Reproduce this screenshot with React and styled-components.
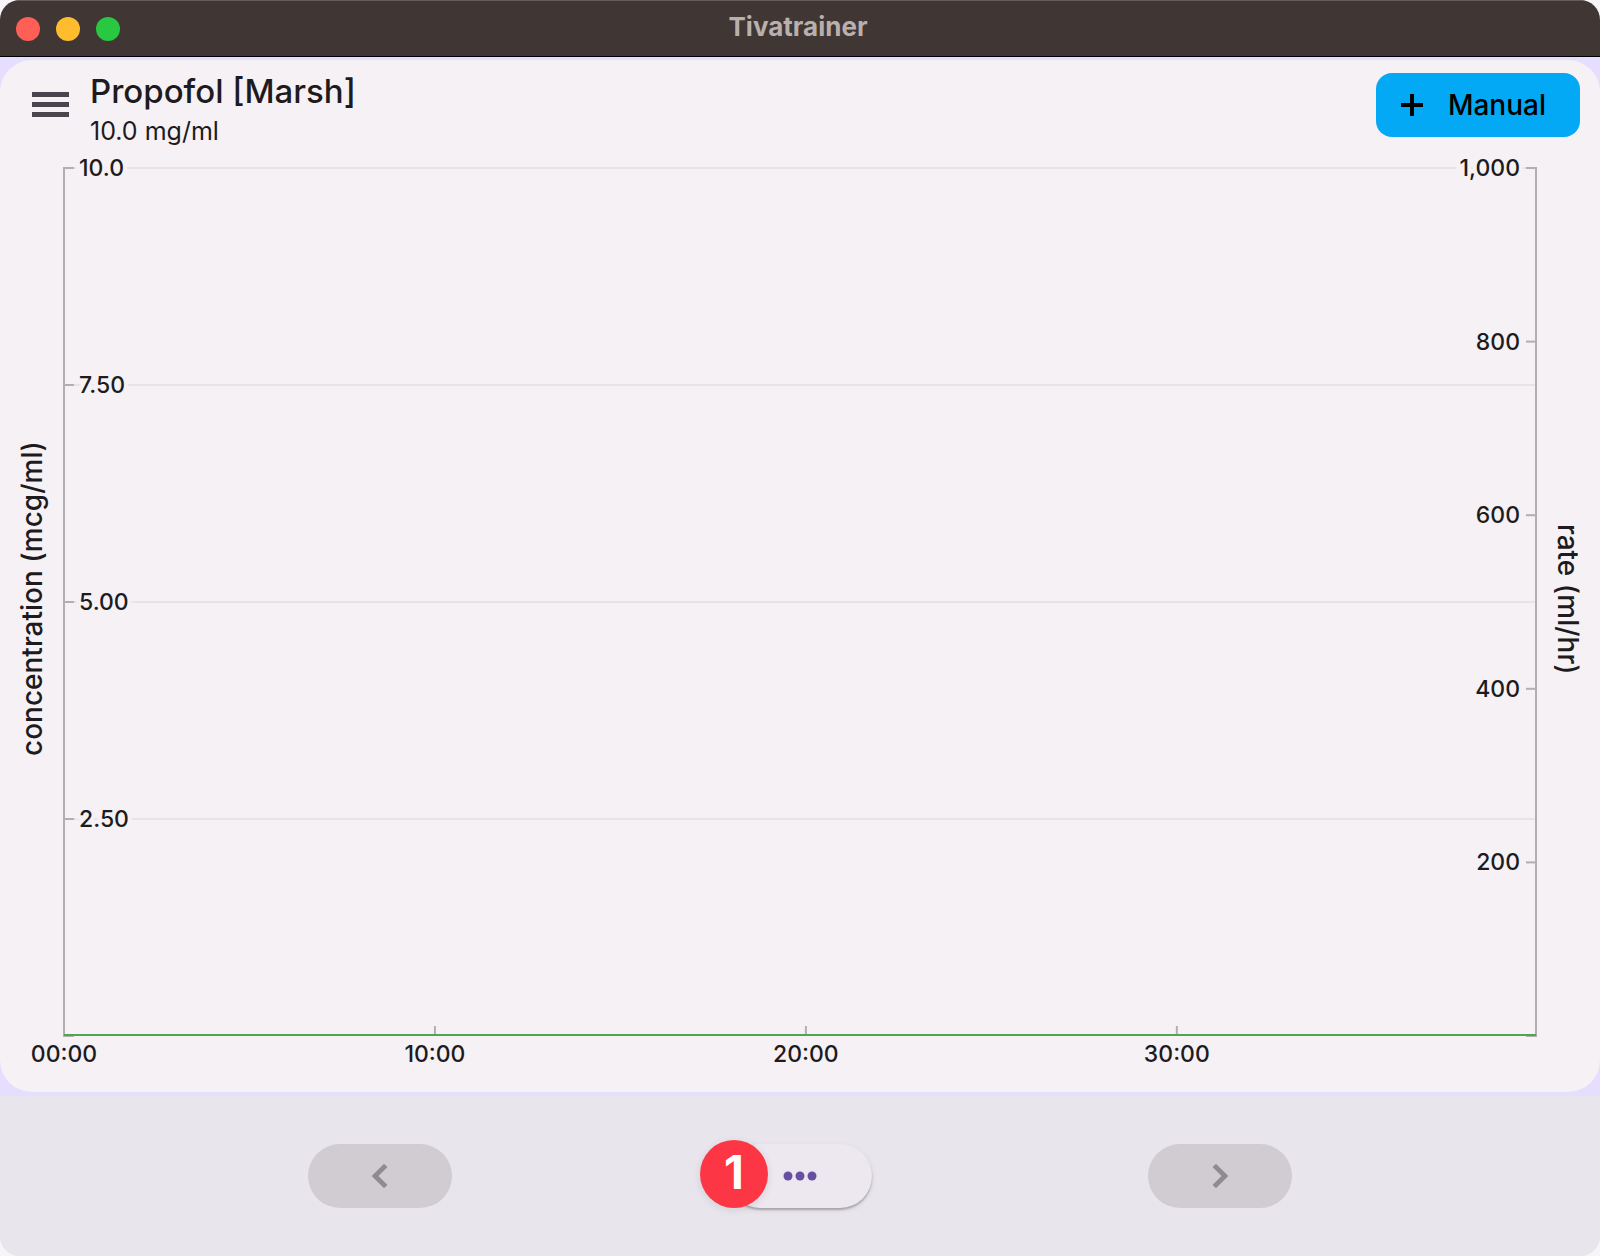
import React from "react";
import styled, { createGlobalStyle } from "styled-components";

const Global = createGlobalStyle`
  * { box-sizing: border-box; }
  body {
    margin: 0;
    background: #f7f5f8;
    font-family: Inter, "Liberation Sans", sans-serif;
    color: #1d1b20;
  }
  button { font: inherit; border: 0; padding: 0; margin: 0; cursor: pointer; }
  h1, p { margin: 0; }
`;

const Window = styled.div`
  min-height: 100vh;
  display: flex;
  flex-direction: column;
  overflow: hidden;
  border-radius: 20px;
  background: #e6deff;
`;

const TitleBar = styled.header`
  display: grid;
  grid-template-columns: 1fr auto 1fr;
  align-items: center;
  height: 57px;
  padding: 0 20px 0 16px;
  background: #403633;
  border-top: 1px solid #665d5a;
  border-bottom: 1px solid #000;
`;

const Lights = styled.div`
  display: flex;
  gap: 16px;
`;

const Light = styled.button`
  width: 24px;
  height: 24px;
  border-radius: 50%;
  background: ${(p) => p.$color};
`;

const WindowTitle = styled.div`
  padding-bottom: 4px;
  font-size: 26px;
  line-height: 32px;
  font-weight: 700;
  color: #b9afad;
`;

const Card = styled.main`
  flex: 1;
  display: flex;
  flex-direction: column;
  margin: 3px 0 4px;
  padding-bottom: 56px;
  border-radius: 32px;
  background: #f6f1f5;
`;

const Header = styled.div`
  display: flex;
  align-items: flex-start;
  padding: 13px 20px 15px 32px;
`;

const MenuButton = styled.button`
  display: flex;
  align-items: center;
  height: 64px;
  margin-right: 21px;
  background: none;
`;

const Heading = styled.div`
  flex: 1;
`;

const Drug = styled.h1`
  font-size: 33px;
  line-height: 36px;
  font-weight: 500;
`;

const Strength = styled.p`
  font-size: 25px;
  line-height: 44px;
`;

const ManualButton = styled.button`
  display: flex;
  align-items: center;
  gap: 24px;
  height: 64px;
  padding: 0 34px 0 24px;
  border-radius: 16px;
  background: #03a9f4;
  color: #000;
  font-size: 28px;
  font-weight: 500;
`;

const ChartRow = styled.section`
  flex: 1;
  display: grid;
  grid-template-columns: 64px 1fr 64px;
`;

const AxisTitle = styled.div`
  display: flex;
  align-items: center;
  justify-content: center;
  writing-mode: vertical-rl;
  font-size: 28px;
  line-height: 64px;
  font-weight: 500;
  padding-${(p) => (p.$upward ? "top" : "bottom")}: 6px;
  transform: ${(p) => (p.$upward ? "rotate(180deg)" : "none")};
`;

const PlotArea = styled.div`
  display: flex;
  min-height: 400px;
`;

const Plot = styled.svg`
  flex: 1;
  width: 100%;
  height: auto;
  overflow: visible;
`;

const Grid = styled.line`
  stroke: #e8e3e8;
  stroke-width: 2;
`;

const Axis = styled.line`
  stroke: #b3aeb3;
  stroke-width: 2;
`;

const Infusion = styled.line`
  stroke: #4ca750;
  stroke-width: 2;
`;

const TickLabel = styled.text`
  font-size: 23px;
  font-weight: 500;
  fill: #1d1b20;
  stroke: #f6f1f5;
  stroke-width: 8;
  paint-order: stroke;
  text-anchor: ${(p) => p.$anchor};
`;

const Footer = styled.footer`
  display: flex;
  justify-content: space-evenly;
  padding: 48px 32px;
  background: #e8e5ec;
`;

const Pill = styled.button`
  display: flex;
  align-items: center;
  justify-content: center;
  width: 144px;
  height: 64px;
  border-radius: 32px;
  color: #6750a4;
  background: #ede8ef;
  box-shadow: 0 2px 2px rgba(0, 0, 0, 0.24), 0 2px 6px rgba(0, 0, 0, 0.08);

  &:disabled {
    color: #8f8b91;
    background: #d0ccd2;
    box-shadow: none;
    cursor: default;
  }
`;

const MoreSlot = styled.div`
  position: relative;
`;

const Badge = styled.span`
  position: absolute;
  left: -28px;
  top: -4px;
  width: 68px;
  height: 68px;
  border-radius: 50%;
  background: #fc3644;
  color: #fff;
  font-size: 46px;
  line-height: 64px;
  font-weight: 700;
  text-align: center;
  box-shadow: 0 2px 8px rgba(0, 0, 0, 0.1);
`;

const lights = [
  ["Close", "#ff5f57"],
  ["Minimize", "#febc2e"],
  ["Zoom", "#28c840"],
];

const concentrations = [
  { label: "10.0", at: 0 },
  { label: "7.50", at: 25 },
  { label: "5.00", at: 50 },
  { label: "2.50", at: 75 },
];

const rates = [
  { label: "1,000", at: 0 },
  { label: "800", at: 20 },
  { label: "600", at: 40 },
  { label: "400", at: 60 },
  { label: "200", at: 80 },
];

const times = [
  { label: "00:00", at: 0 },
  { label: "10:00", at: 25.2 },
  { label: "20:00", at: 50.4 },
  { label: "30:00", at: 75.6 },
];

function Chart() {
  return (
    <Plot role="img" aria-label="Concentration and rate over time">
      {concentrations.map(({ at }) => (
        <Grid key={at} x1="0" x2="100%" y1={`${at}%`} y2={`${at}%`} />
      ))}
      {concentrations.map(({ label, at }) => (
        <TickLabel key={label} $anchor="start" x="15" y={`${at}%`} dy="8">
          {label}
        </TickLabel>
      ))}
      {rates.map(({ label, at }) => (
        <TickLabel key={label} $anchor="end" x="100%" y={`${at}%`} dx="-16" dy="8">
          {label}
        </TickLabel>
      ))}
      {times.map(({ label, at }) => (
        <TickLabel key={label} $anchor="middle" x={`${at}%`} y="100%" dy="26">
          {label}
        </TickLabel>
      ))}

      <Axis x1="0" x2="0" y1="0" y2="100%" />
      <Axis x1="100%" x2="100%" y1="0" y2="100%" />
      {[...concentrations, { at: 100 }].map(({ at }) => (
        <Axis key={at} x1="-1" x2="10" y1={`${at}%`} y2={`${at}%`} />
      ))}
      <svg x="100%" overflow="visible">
        {[...rates, { at: 100 }].map(({ at }) => (
          <Axis key={at} x1="-10" x2="1" y1={`${at}%`} y2={`${at}%`} />
        ))}
      </svg>
      <svg y="100%" overflow="visible">
        {times.map(({ at }) => (
          <Axis key={at} x1={`${at}%`} x2={`${at}%`} y1="-10" y2="0" />
        ))}
        <Infusion x1="0" x2="100%" y1="-1" y2="-1" />
      </svg>
    </Plot>
  );
}

function Chevron({ right }) {
  return (
    <svg width="48" height="48" viewBox="0 0 24 24" aria-hidden="true">
      <path
        fill="currentColor"
        stroke="currentColor"
        strokeWidth="0.6"
        strokeLinejoin="round"
        d={
          right
            ? "M8.7 7.5 10 6.3l5.7 5.7-5.7 5.7-1.3-1.2 4.5-4.5z"
            : "M15.3 7.5 14 6.3 8.3 12l5.7 5.7 1.3-1.2-4.5-4.5z"
        }
      />
    </svg>
  );
}

export default function App() {
  return (
    <Window>
      <Global />
      <TitleBar>
        <Lights>
          {lights.map(([name, color]) => (
            <Light key={name} type="button" aria-label={name} $color={color} />
          ))}
        </Lights>
        <WindowTitle>Tivatrainer</WindowTitle>
      </TitleBar>

      <Card>
        <Header>
          <MenuButton type="button" aria-label="Menu">
            <svg width="37" height="26" viewBox="0 0 37 26" aria-hidden="true">
              <path fill="#49454f" d="M0 0h37v5H0zM0 10h37v5H0zM0 20h37v5H0z" />
            </svg>
          </MenuButton>
          <Heading>
            <Drug>Propofol [Marsh]</Drug>
            <Strength>10.0 mg/ml</Strength>
          </Heading>
          <ManualButton type="button">
            <svg width="24" height="24" viewBox="0 0 24 24" aria-hidden="true">
              <path fill="currentColor" d="M10 1h4v9h9v4h-9v9h-4v-9H1v-4h9z" />
            </svg>
            Manual
          </ManualButton>
        </Header>

        <ChartRow>
          <AxisTitle $upward>concentration (mcg/ml)</AxisTitle>
          <PlotArea>
            <Chart />
          </PlotArea>
          <AxisTitle>rate (ml/hr)</AxisTitle>
        </ChartRow>
      </Card>

      <Footer>
        <Pill type="button" aria-label="Previous" disabled>
          <Chevron />
        </Pill>
        <MoreSlot>
          <Pill type="button" aria-label="More">
            <svg width="36" height="12" viewBox="0 0 36 12" aria-hidden="true">
              <g fill="currentColor">
                <circle cx="6" cy="6" r="4.5" />
                <circle cx="18" cy="6" r="4.5" />
                <circle cx="30" cy="6" r="4.5" />
              </g>
            </svg>
          </Pill>
          <Badge>1</Badge>
        </MoreSlot>
        <Pill type="button" aria-label="Next" disabled>
          <Chevron right />
        </Pill>
      </Footer>
    </Window>
  );
}
